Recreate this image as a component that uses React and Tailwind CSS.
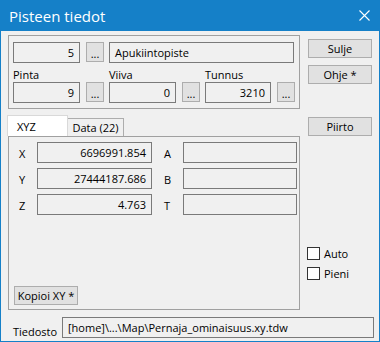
import React from 'react';

const Box = ({ className = '', right, children }) => (
  <div
    className={`h-[21px] border border-[#7a7a7a] bg-[#f0f0f0] flex items-center px-[5px] whitespace-nowrap overflow-hidden ${right ? 'justify-end' : ''} ${className}`}
  >
    {children}
  </div>
);

const Dots = ({ className = '' }) => (
  <div className={`h-[20px] w-[18px] border border-[#adadad] bg-[#e1e1e1] flex items-center justify-center pt-[2px] ${className}`}>
    ...
  </div>
);

const Btn = ({ className = '', children }) => (
  <div className={`h-[19px] w-[64px] border border-[#adadad] bg-[#e1e1e1] flex items-center justify-center ${className}`}>
    {children}
  </div>
);

const Check = ({ className = '', label }) => (
  <div className={`flex items-center gap-[4px] ${className}`}>
    <div className="w-[13px] h-[13px] border border-[#333333] bg-white" />
    <span>{label}</span>
  </div>
);

const coords = [
  { k: 'X', v: '6696991.854', k2: 'A' },
  { k: 'Y', v: '27444187.686', k2: 'B' },
  { k: 'Z', v: '4.763', k2: 'T' },
];

export default function App() {
  return (
    <div className="w-[380px] h-[342px] bg-[#1580c8] flex flex-col font-['Open_Sans',sans-serif] text-[11px] text-black leading-[15px]">
      {/* title bar */}
      <div className="h-[31px] flex items-center justify-between pl-[9px] pr-[10px] text-white">
        <span className="text-[15px] leading-[20px]">Pisteen tiedot</span>
        <svg width="11" height="11" viewBox="0 0 11 11">
          <path d="M0.5 0.5 L10.5 10.5 M10.5 0.5 L0.5 10.5" stroke="white" strokeWidth="1.1" />
        </svg>
      </div>

      <div className="flex-1 mx-px mb-px bg-[#f0f0f0] flex flex-col">
        <div className="flex">
          {/* left column */}
          <div className="ml-[7px] w-[292px] flex flex-col">
            <div className="mt-[4px] h-[74px] border border-[#a0a0a0] pl-[4px] pt-[6px]">
              <div className="flex">
                <Box right className="w-[67px]">5</Box>
                <Dots className="ml-[6px]" />
                <Box className="ml-[5px] w-[185px]">Apukiintopiste</Box>
              </div>
              <div className="flex mt-[4px]">
                <div className="flex flex-col">
                  <span className="h-[15px]">Pinta</span>
                  <div className="flex">
                    <Box right className="w-[67px]">9</Box>
                    <Dots className="ml-[6px]" />
                  </div>
                </div>
                <div className="flex flex-col ml-[5px]">
                  <span className="h-[15px]">Viiva</span>
                  <div className="flex">
                    <Box right className="w-[67px]">0</Box>
                    <Dots className="ml-[6px]" />
                  </div>
                </div>
                <div className="flex flex-col ml-[5px]">
                  <span className="h-[15px]">Tunnus</span>
                  <div className="flex">
                    <Box right className="w-[66px]">3210</Box>
                    <Dots className="ml-[6px] w-[17px]" />
                  </div>
                </div>
              </div>
            </div>

            {/* tabs */}
            <div className="mt-[6px] h-[21px] flex items-end">
              <div className="h-[21px] w-[61px] -ml-px bg-white border-t border-l border-r border-[#d9d9d9] pl-[9px] flex items-center">
                XYZ
              </div>
              <div className="h-[18px] w-[56px] border-t border-r border-[#adadad] bg-[#f0f0f0] flex items-center justify-center">
                Data (22)
              </div>
            </div>
            <div className="h-[174px] border border-[#a0a0a0] flex flex-col justify-between pt-[5px] pb-[4px]">
              <div className="flex flex-col gap-[5px]">
                {coords.map((c) => (
                  <div key={c.k} className="flex">
                    <span className="w-[28px] pl-[10px] pt-[4px]">{c.k}</span>
                    <Box right className="w-[115px]">{c.v}</Box>
                    <span className="w-[31px] pl-[12px] pt-[4px]">{c.k2}</span>
                    <Box className="w-[114px]" />
                  </div>
                ))}
              </div>
              <Btn className="ml-[5px] h-[17px]">Kopioi XY *</Btn>
            </div>
          </div>

          {/* right column */}
          <div className="ml-[8px] flex flex-col">
            <Btn className="mt-[8px]">Sulje</Btn>
            <Btn className="mt-[7px]">Ohje *</Btn>
            <Btn className="mt-[33px]">Piirto</Btn>
            <Check className="mt-[110px] -ml-px" label="Auto" />
            <Check className="mt-[5px] -ml-px" label="Pieni" />
          </div>
        </div>

        {/* file row */}
        <div className="flex mt-[7px] pl-[12px]">
          <span className="w-[49px] pt-[7px]">Tiedosto</span>
          <Box className="w-[312px] h-[20px]">{'[home]\\...\\Map\\Pernaja_ominaisuus.xy.tdw'}</Box>
        </div>
      </div>
    </div>
  );
}
